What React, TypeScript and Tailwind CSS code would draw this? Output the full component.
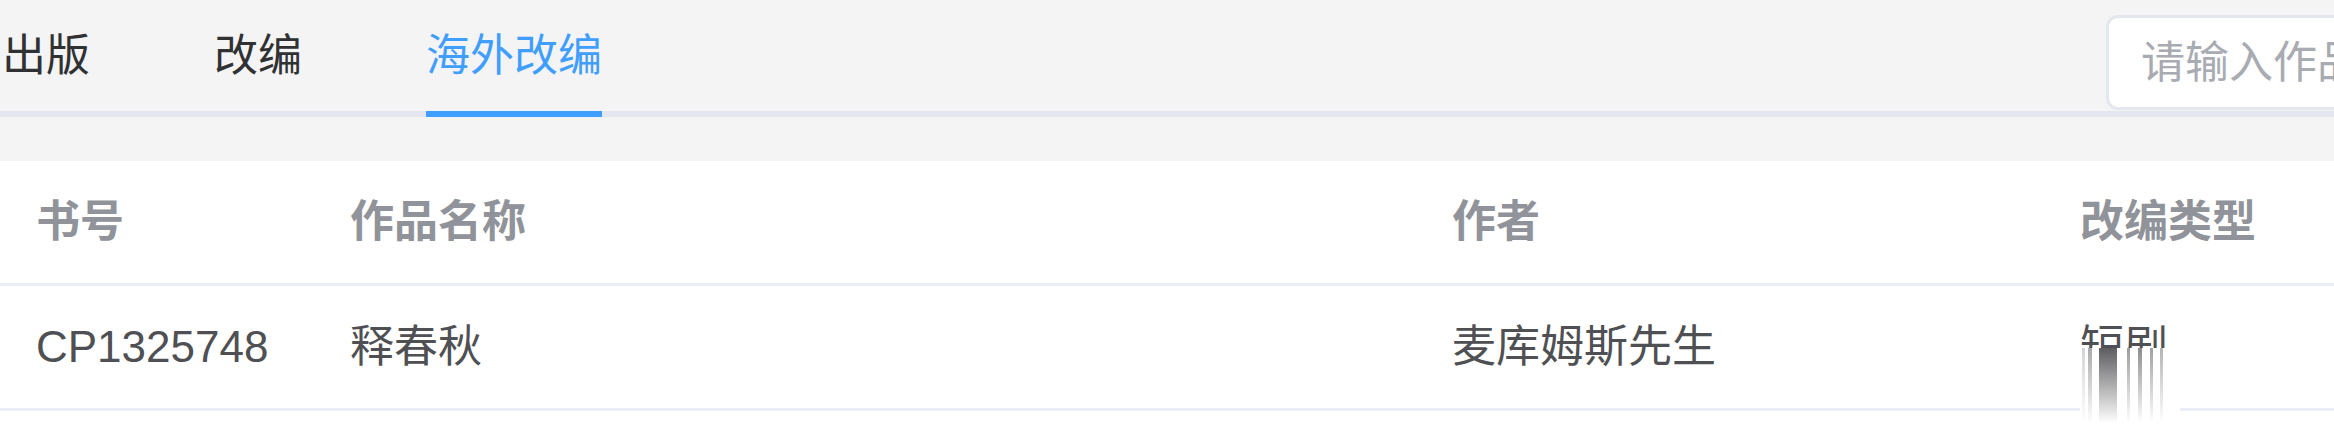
import * as React from 'react'

const tabs = ['出版', '改编', '海外改编']

const columns = ['书号', '作品名称', '作者', '改编类型']

const rows = [
    { id: 'CP1325748', title: '释春秋', author: '麦库姆斯先生', type: '短剧' },
]

// smeared strokes under the glitched "短剧" cell
const streaks = [
    { left: 2, width: 3, tone: 'from-[#d4d4d6]' },
    { left: 8, width: 4, tone: 'from-[#a9a9ac]' },
    { left: 19, width: 18, tone: 'from-[#5d5d60]' },
    { left: 47, width: 3, tone: 'from-[#9c9c9f]' },
    { left: 58, width: 4, tone: 'from-[#8d8d90]' },
    { left: 70, width: 3, tone: 'from-[#a0a0a3]' },
    { left: 80, width: 3, tone: 'from-[#b4b4b7]' },
]

const App = () => {
    const active = 2

    return (
        <div
            className="w-[2334px] h-[446px] overflow-hidden bg-[#f4f4f5] text-[44px]"
            style={{ fontFamily: '"Liberation Sans", "Noto Sans CJK SC", sans-serif' }}
        >
            <div className="flex h-[117px] border-b-[6px] border-[#e4e7ed]">
                <div className="flex h-full items-center gap-[124px] pl-[2px]">
                    {tabs.map((tab, i) => (
                        <div
                            key={tab}
                            className={
                                i === active
                                    ? 'relative flex h-full items-center leading-[66px] text-[#409eff]'
                                    : 'relative flex h-full items-center leading-[66px] text-[#303133]'
                            }
                        >
                            {tab}
                            {i === active && (
                                <span className="absolute left-0 right-0 -bottom-[6px] h-[6px] bg-[#409eff]" />
                            )}
                        </div>
                    ))}
                </div>
                <div className="ml-auto -mr-[92px] mt-[15px] h-[95px] w-[320px] shrink-0">
                    <input
                        className="h-full w-full rounded-[12px] border-[3px] border-[#e4e7ed] bg-white pl-[32px] text-[44px] text-[#606266] outline-none placeholder:text-[#a8abb2]"
                        placeholder="请输入作品名称"
                    />
                </div>
            </div>

            <div className="mt-[44px] h-[285px] bg-white">
                <div className="grid h-[125px] grid-cols-[314px_1102px_628px_1fr] items-center border-b-[3px] border-[#ebeef5] px-[36px] font-semibold leading-[66px] text-[#909399]">
                    {columns.map((c) => (
                        <div key={c}>{c}</div>
                    ))}
                </div>
                {rows.map((r) => (
                    <div
                        key={r.id}
                        className="grid h-[125px] grid-cols-[314px_1102px_628px_1fr] items-center border-b-[3px] border-[#ebeef5] px-[36px] leading-[66px] text-[#4f5053]"
                    >
                        <div>{r.id}</div>
                        <div>{r.title}</div>
                        <div>{r.author}</div>
                        <div className="relative">
                            <span>{r.type}</span>
                            <div className="absolute left-0 top-[34px] h-[88px] w-[100px] bg-white">
                                {streaks.map((s) => (
                                    <span
                                        key={s.left}
                                        className={`absolute top-0 h-[75px] bg-gradient-to-b ${s.tone} to-transparent`}
                                        style={{ left: s.left, width: s.width }}
                                    />
                                ))}
                            </div>
                        </div>
                    </div>
                ))}
            </div>
        </div>
    )
}

export default App
